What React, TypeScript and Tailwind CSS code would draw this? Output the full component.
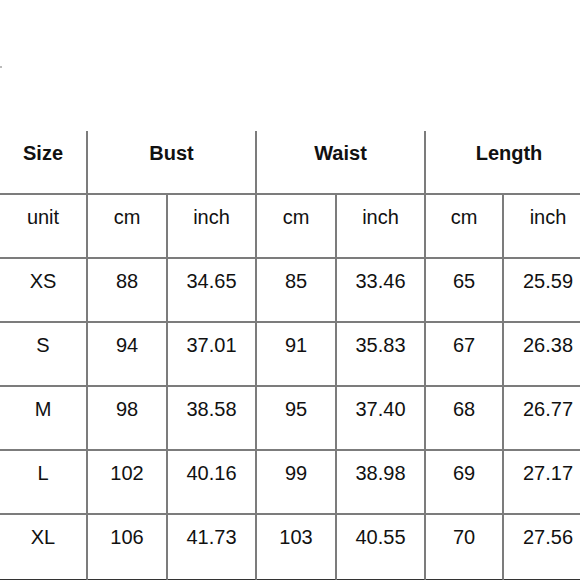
import React from "react";

const rows = [
  ["XS", "88", "34.65", "85", "33.46", "65", "25.59"],
  ["S", "94", "37.01", "91", "35.83", "67", "26.38"],
  ["M", "98", "38.58", "95", "37.40", "68", "26.77"],
  ["L", "102", "40.16", "99", "38.98", "69", "27.17"],
  ["XL", "106", "41.73", "103", "40.55", "70", "27.56"],
];

const cell =
  "h-[64px] border-b-2 border-r-2 border-[#7c7c7c] pt-[11px] text-center text-[20px] leading-[23px] text-[#111]";

export default function App() {
  return (
    <div
      className="w-[580px] h-[580px] overflow-hidden bg-white"
      style={{ fontFamily: '"Liberation Sans", Arial, sans-serif' }}
    >
      <div className="h-[131px] pt-[66px]">
        <div className="w-[2px] h-[2px] bg-[#bbb]" />
      </div>
      <div className="grid w-[594px] grid-cols-[88px_80px_89px_80px_89px_78px_90px]">
        <div className={`${cell} h-[64px] font-bold`}>Size</div>
        <div className={`${cell} col-span-2 font-bold`}>Bust</div>
        <div className={`${cell} col-span-2 font-bold`}>Waist</div>
        <div className={`${cell} col-span-2 font-bold`}>Length</div>

        <div className={cell}>unit</div>
        <div className={cell}>cm</div>
        <div className={cell}>inch</div>
        <div className={cell}>cm</div>
        <div className={cell}>inch</div>
        <div className={cell}>cm</div>
        <div className={cell}>inch</div>

        {rows.map((r, i) =>
          r.map((v, j) => (
            <div
              key={`${i}-${j}`}
              className={
                i === rows.length - 1
                  ? "h-[67px] border-b-[3px] border-b-[#333] border-r-2 border-r-[#7c7c7c] pt-[11px] text-center text-[20px] leading-[23px] text-[#111]"
                  : cell
              }
            >
              {v}
            </div>
          ))
        )}
      </div>
    </div>
  );
}
